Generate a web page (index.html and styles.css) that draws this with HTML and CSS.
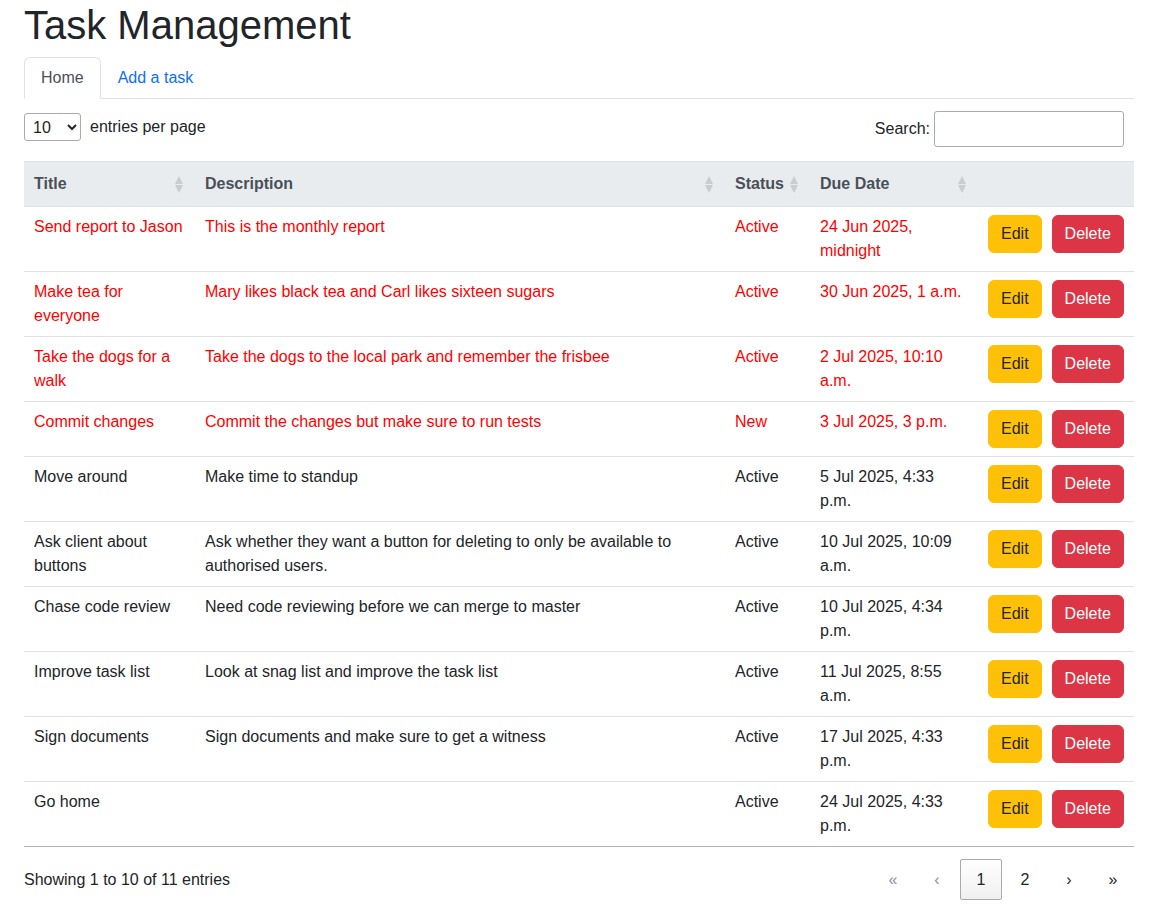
FILE: index.html
```html
<!DOCTYPE html>
<html lang="en">
<head>
<meta charset="utf-8">
<title>Task Management</title>
<link rel="stylesheet" href="styles.css">
</head>
<body>
<div class="page">
  <h1 class="title">Task Management</h1>
  <ul class="tabs">
    <li class="tab active">Home</li>
    <li class="tab link">Add a task</li>
  </ul>

  <div class="toolbar">
    <div class="length">
      <select class="length-select"><option>10</option><option>25</option><option>50</option></select>
      <span class="length-label">entries per page</span>
    </div>
    <div class="search">
      <label class="search-label">Search:</label>
      <input class="search-input" type="search">
    </div>
  </div>

  <table class="tasks">
    <colgroup>
      <col class="c-title"><col class="c-desc"><col class="c-status"><col class="c-date"><col class="c-actions">
    </colgroup>
    <thead>
      <tr>
        <th class="sortable">Title<svg class="sort" viewBox="0 0 8 17" width="8" height="17"><polygon points="0,8 4,0 8,8"/><polygon points="0,9 4,17 8,9"/></svg></th>
        <th class="sortable">Description<svg class="sort" viewBox="0 0 8 17" width="8" height="17"><polygon points="0,8 4,0 8,8"/><polygon points="0,9 4,17 8,9"/></svg></th>
        <th class="sortable">Status<svg class="sort" viewBox="0 0 8 17" width="8" height="17"><polygon points="0,8 4,0 8,8"/><polygon points="0,9 4,17 8,9"/></svg></th>
        <th class="sortable">Due Date<svg class="sort" viewBox="0 0 8 17" width="8" height="17"><polygon points="0,8 4,0 8,8"/><polygon points="0,9 4,17 8,9"/></svg></th>
        <th></th>
      </tr>
    </thead>
    <tbody>
      <tr class="overdue">
        <td>Send report to Jason</td><td>This is the monthly report</td><td>Active</td><td>24 Jun 2025, midnight</td>
        <td><div class="actions"><button class="btn btn-edit">Edit</button><button class="btn btn-delete">Delete</button></div></td>
      </tr>
      <tr class="overdue">
        <td>Make tea for everyone</td><td>Mary likes black tea and Carl likes sixteen sugars</td><td>Active</td><td>30 Jun 2025, 1 a.m.</td>
        <td><div class="actions"><button class="btn btn-edit">Edit</button><button class="btn btn-delete">Delete</button></div></td>
      </tr>
      <tr class="overdue">
        <td>Take the dogs for a walk</td><td>Take the dogs to the local park and remember the frisbee</td><td>Active</td><td>2 Jul 2025, 10:10 a.m.</td>
        <td><div class="actions"><button class="btn btn-edit">Edit</button><button class="btn btn-delete">Delete</button></div></td>
      </tr>
      <tr class="overdue">
        <td>Commit changes</td><td>Commit the changes but make sure to run tests</td><td>New</td><td>3 Jul 2025, 3 p.m.</td>
        <td><div class="actions"><button class="btn btn-edit">Edit</button><button class="btn btn-delete">Delete</button></div></td>
      </tr>
      <tr>
        <td>Move around</td><td>Make time to standup</td><td>Active</td><td>5 Jul 2025, 4:33 p.m.</td>
        <td><div class="actions"><button class="btn btn-edit">Edit</button><button class="btn btn-delete">Delete</button></div></td>
      </tr>
      <tr>
        <td>Ask client about buttons</td><td>Ask whether they want a button for deleting to only be available to authorised users.</td><td>Active</td><td>10 Jul 2025, 10:09 a.m.</td>
        <td><div class="actions"><button class="btn btn-edit">Edit</button><button class="btn btn-delete">Delete</button></div></td>
      </tr>
      <tr>
        <td>Chase code review</td><td>Need code reviewing before we can merge to master</td><td>Active</td><td>10 Jul 2025, 4:34 p.m.</td>
        <td><div class="actions"><button class="btn btn-edit">Edit</button><button class="btn btn-delete">Delete</button></div></td>
      </tr>
      <tr>
        <td>Improve task list</td><td>Look at snag list and improve the task list</td><td>Active</td><td>11 Jul 2025, 8:55 a.m.</td>
        <td><div class="actions"><button class="btn btn-edit">Edit</button><button class="btn btn-delete">Delete</button></div></td>
      </tr>
      <tr>
        <td>Sign documents</td><td>Sign documents and make sure to get a witness</td><td>Active</td><td>17 Jul 2025, 4:33 p.m.</td>
        <td><div class="actions"><button class="btn btn-edit">Edit</button><button class="btn btn-delete">Delete</button></div></td>
      </tr>
      <tr>
        <td>Go home</td><td></td><td>Active</td><td>24 Jul 2025, 4:33 p.m.</td>
        <td><div class="actions"><button class="btn btn-edit">Edit</button><button class="btn btn-delete">Delete</button></div></td>
      </tr>
    </tbody>
  </table>

  <div class="footer">
    <div class="info">Showing 1 to 10 of 11 entries</div>
    <nav class="paging">
      <span class="page-btn disabled">«</span>
      <span class="page-btn disabled">‹</span>
      <span class="page-btn current">1</span>
      <span class="page-btn">2</span>
      <span class="page-btn">›</span>
      <span class="page-btn">»</span>
    </nav>
  </div>
</div>
</body>
</html>
```

FILE: styles.css
```css
* { box-sizing: border-box; }

html, body {
  margin: 0;
  padding: 0;
  background: #fff;
}

body {
  font-family: "Liberation Sans", Arial, sans-serif;
  font-size: 16px;
  line-height: 24px;
  color: #212529;
}

.page {
  width: 1110px;
  margin-left: 24px;
}

.title {
  margin: 1px 0 8px;
  font-size: 40px;
  line-height: 48px;
  font-weight: 500;
}

.tabs {
  display: flex;
  list-style: none;
  margin: 0;
  padding: 0;
  border-bottom: 1px solid #dee2e6;
}

.tab {
  padding: 8px 16px;
  margin-bottom: -1px;
  border: 1px solid transparent;
  border-top-left-radius: 6px;
  border-top-right-radius: 6px;
}

.tab.active {
  color: #495057;
  background: #fff;
  border-color: #dee2e6 #dee2e6 #fff;
}

.tab.link {
  color: #0d6efd;
}

.toolbar {
  display: flex;
  justify-content: space-between;
  align-items: center;
  margin-top: 12px;
  margin-bottom: 14px;
}

.length {
  display: flex;
  align-items: center;
  margin-top: -4px;
}

.length-select {
  font-family: inherit;
  font-size: 16px;
  color: #212529;
  width: 57px;
  height: 28px;
  padding: 4px;
  border: 1px solid #aaa;
  border-radius: 3px;
  background-color: transparent;
}

.length-label {
  margin-left: 9px;
}

.search {
  display: flex;
  align-items: center;
  margin-right: 10px;
}

.search-input {
  width: 190px;
  height: 36px;
  margin-left: 4px;
  padding: 5px;
  font-family: inherit;
  font-size: 16px;
  border: 1px solid #aaa;
  border-radius: 3px;
  background: transparent;
}

.tasks {
  width: 1110px;
  table-layout: fixed;
  border-collapse: collapse;
  border-bottom: 1px solid #b3b3b3;
}

.c-title { width: 171px; }
.c-desc { width: 530px; }
.c-status { width: 85px; }
.c-date { width: 168px; }
.c-actions { width: 156px; }

.tasks th {
  position: relative;
  text-align: left;
  font-weight: 700;
  color: #495057;
  background: #e9ecef;
  padding: 10px 10px;
  border-top: 1px solid #dee2e6;
  border-bottom: 1px solid #dee2e6;
}

.sort {
  position: absolute;
  right: 12px;
  top: 14px;
  fill: #000;
  opacity: 0.125;
}

.tasks td {
  padding: 8px 10px;
  vertical-align: top;
  border-bottom: 1px solid #dee2e6;
}

.tasks tr:last-child td {
  border-bottom: none;
}

.overdue td {
  color: #ff0000;
}

.actions {
  display: flex;
  gap: 10px;
}

.btn {
  font-family: inherit;
  font-size: 16px;
  line-height: 24px;
  padding: 6px 12px;
  border-radius: 6px;
  border: 1px solid transparent;
}

.btn-edit {
  background: #ffc107;
  border-color: #ffc107;
  color: #212529;
}

.btn-delete {
  background: #dc3545;
  border-color: #dc3545;
  color: #fff;
}

.footer {
  display: flex;
  justify-content: space-between;
  align-items: center;
  margin-top: 12px;
}

.paging {
  display: flex;
}

.page-btn {
  width: 42px;
  height: 41px;
  margin-left: 2px;
  display: flex;
  align-items: center;
  justify-content: center;
  border: 1px solid transparent;
  border-radius: 2px;
  color: #212529;
}

.page-btn.disabled {
  color: #8a9099;
}

.page-btn.current {
  border-color: #aaa;
  background: linear-gradient(#fff, #f0f0f0);
}
```
